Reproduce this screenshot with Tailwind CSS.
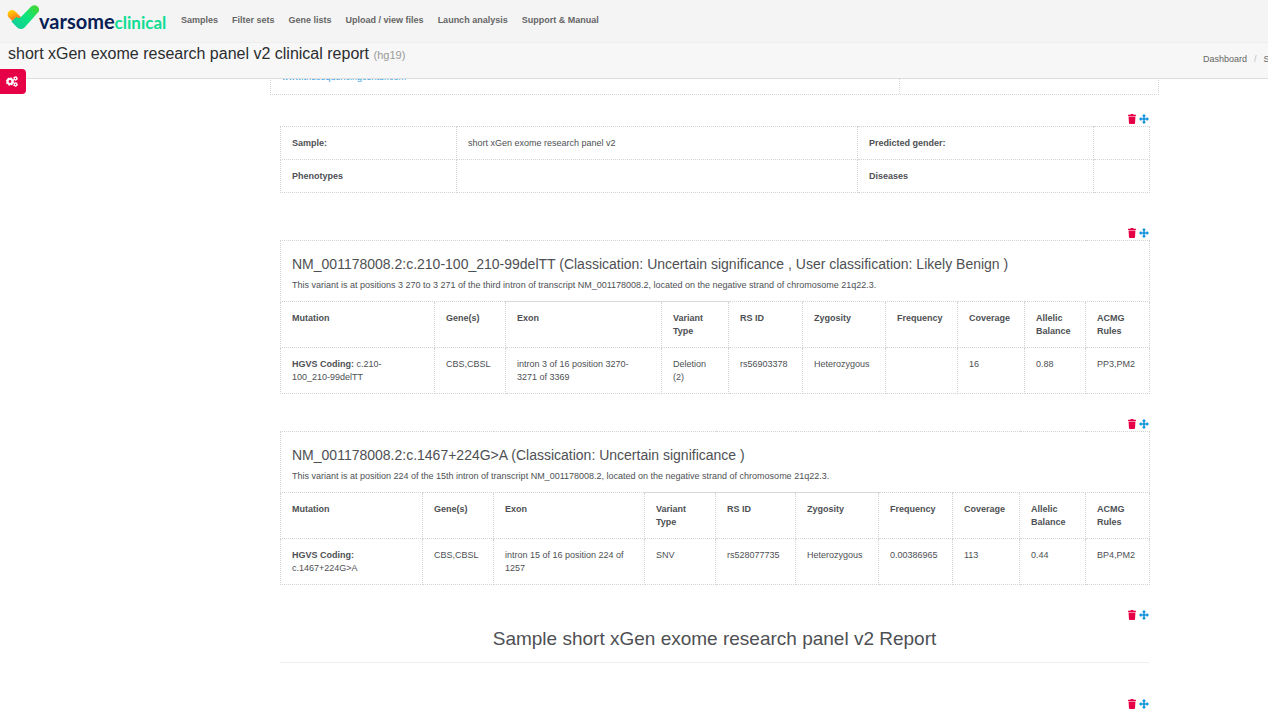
<!DOCTYPE html>
<html lang="en">
<head>
<meta charset="utf-8">
<title>short xGen exome research panel v2 clinical report</title>
<script src="https://cdn.jsdelivr.net/npm/@tailwindcss/browser@4"></script>
</head>
<body class="h-screen overflow-hidden bg-white font-['Liberation_Sans',Arial,sans-serif] text-[9px] leading-[13px] text-[#4e5054]">
<svg class="hidden" aria-hidden="true">
  <symbol id="trash" viewBox="0 0 448 512" preserveAspectRatio="none"><path d="M432 32H312l-9-19a24 24 0 0 0-22-13H167a24 24 0 0 0-22 13l-9 19H16A16 16 0 0 0 0 48v32a16 16 0 0 0 16 16h416a16 16 0 0 0 16-16V48a16 16 0 0 0-16-16zM32 128l21 339a48 48 0 0 0 48 45h246a48 48 0 0 0 48-45l21-339z"/></symbol>
  <symbol id="move" viewBox="0 0 512 512"><path d="M256 0l110 120h-70v96h96v-70l120 110-120 110v-70h-96v96h70L256 512 146 392h70v-96h-96v70L0 256l120-110v70h96v-96h-70z"/></symbol>
</svg>

<header class="relative z-10 bg-[#f4f4f4]">
  <div class="flex h-[42px] items-center pl-[7px]">
    <a href="#" class="flex h-[42px] w-[159px] shrink-0" aria-label="VarSome Clinical">
      <svg class="mt-[5px] h-[25px] w-[32px] shrink-0" viewBox="7 5 32 25">
        <defs>
          <linearGradient id="og" gradientUnits="userSpaceOnUse" x1="12" y1="10" x2="16" y2="22"><stop offset="0" stop-color="#ffd400"/><stop offset=".45" stop-color="#ffa010"/><stop offset="1" stop-color="#f4602c"/></linearGradient>
          <linearGradient id="gg" gradientUnits="userSpaceOnUse" x1="16" y1="27" x2="36" y2="8"><stop offset="0" stop-color="#12cf9a"/><stop offset=".55" stop-color="#0be57c"/><stop offset="1" stop-color="#3fd83c"/></linearGradient>
        </defs>
        <path d="M12 14.400l7 7" stroke="url(#og)" stroke-width="8.800" stroke-linecap="round"/>
        <path d="M11.400 21.400L16.400 17q2.600 2.400 5-.4L31.200 6.600Q34 4 37 6t1.800 5.400L24.800 27.200Q21 30.900 17.200 27.400z" fill="url(#gg)"/>
      </svg>
      <span class="mt-[9px] font-['Lato',sans-serif] text-[20px] leading-[24px] font-bold whitespace-nowrap text-[#0a1f56]">varsome<span class="text-[17px] text-[#0fdc93]">clinical</span></span>
    </a>
    <nav class="flex gap-[14px] pb-px pl-[15px] font-bold whitespace-nowrap text-[#666]">
      <a href="#">Samples</a><a href="#">Filter sets</a><a href="#">Gene lists</a><a href="#">Upload / view files</a><a href="#">Launch analysis</a><a href="#">Support &amp; Manual</a>
    </nav>
  </div>
  <div class="flex h-[37px] items-start border-t border-b border-t-[#eee] border-b-[#ddd] bg-[#f7f7f7] pl-[8px]">
    <h1 class="text-[16px] leading-[21px] text-[#2b2d2f]">short xGen exome research panel v2 clinical report <small class="text-[11px] text-[#999]">(hg19)</small></h1>
    <nav class="mt-[10px] ml-auto flex w-[65px] overflow-hidden whitespace-nowrap text-[#666]" aria-label="Breadcrumb">
      <a href="#">Dashboard</a><span class="px-[7px] text-[#bbb]">/</span><a href="#">Samples</a>
    </nav>
  </div>
  <button class="absolute top-[69px] left-0 flex h-[25px] w-[26px] items-center rounded-r-[4px] bg-[#e60046] pl-[6px]" aria-label="Report settings">
    <svg class="mb-px h-[11px] w-[12px]" viewBox="0 0 24 22" fill="none" stroke="#fff">
      <circle cx="8" cy="11" r="4.800" stroke-width="4"/><circle cx="8" cy="11" r="7" stroke-width="2.800" stroke-dasharray="3.100 2.400"/>
      <circle cx="19" cy="5" r="2.600" stroke-width="2.400"/><circle cx="19" cy="5" r="4.200" stroke-width="1.600" stroke-dasharray="2.300 2.090"/>
      <circle cx="19" cy="17" r="2.600" stroke-width="2.400"/><circle cx="19" cy="17" r="4.200" stroke-width="1.600" stroke-dasharray="2.300 2.090"/>
    </svg>
  </button>
</header>

<main class="mr-[109px] ml-[270px]">
  <div class="-mt-[21px] flex h-[37px] border border-dotted border-[#d6d6d6]">
    <div class="flex-1 border-r border-dotted border-[#d6d6d6] pt-[12px] pl-[11px]"><a href="#" class="text-[#2f9fe8]">www.thesequencingcenter.com</a></div>
    <div class="w-[258px]"></div>
  </div>

  <div class="px-[10px]">
    <section class="mt-[19px]">
      <div class="flex h-[12px] items-start justify-end gap-[3px]">
        <button class="text-[#e60046]" aria-label="Delete"><svg class="h-[10px] w-[8px]" fill="currentColor"><use href="#trash"/></svg></button>
        <button class="text-[#0d8fdc]" aria-label="Move"><svg class="h-[10px] w-[10px]" fill="currentColor"><use href="#move"/></svg></button>
      </div>
      <table class="w-full table-fixed border-collapse text-left [&_td]:border [&_td]:border-dotted [&_td]:border-[#d4d4d4] [&_td]:px-[11px] [&_td]:pt-[10px] [&_td]:pb-[9px] [&_th]:border [&_th]:border-dotted [&_th]:border-[#d4d4d4] [&_th]:px-[11px] [&_th]:pt-[10px] [&_th]:pb-[9px]">
        <colgroup><col class="w-[176px]"><col class="w-[401px]"><col class="w-[236px]"><col class="w-[56px]"></colgroup>
        <tbody>
          <tr><th>Sample:</th><td>short xGen exome research panel v2</td><th>Predicted gender:</th><td></td></tr>
          <tr><th>Phenotypes</th><td></td><th>Diseases</th><td></td></tr>
        </tbody>
      </table>
    </section>

    <section class="mt-[35px]">
      <div class="flex h-[12px] items-start justify-end gap-[3px]">
        <button class="text-[#e60046]" aria-label="Delete"><svg class="h-[10px] w-[8px]" fill="currentColor"><use href="#trash"/></svg></button>
        <button class="text-[#0d8fdc]" aria-label="Move"><svg class="h-[10px] w-[10px]" fill="currentColor"><use href="#move"/></svg></button>
      </div>
      <table class="w-full table-fixed border-collapse text-left [&_td]:border [&_td]:border-dotted [&_td]:border-[#d4d4d4] [&_td]:px-[11px] [&_td]:pt-[10px] [&_td]:pb-[9px] [&_td]:align-top [&_th]:border [&_th]:border-dotted [&_th]:border-[#d4d4d4] [&_th]:px-[11px] [&_th]:pt-[10px] [&_th]:pb-[9px] [&_th]:align-top">
        <colgroup><col class="w-[154px]"><col class="w-[71px]"><col class="w-[156px]"><col class="w-[67px]"><col class="w-[74px]"><col class="w-[83px]"><col class="w-[72px]"><col class="w-[67px]"><col class="w-[61px]"><col class="w-[64px]"></colgroup>
        <tbody>
          <tr><td colspan="10"><h2 class="mt-[3px] mb-[5px] text-[14px] leading-[20px]">NM_001178008.2:c.210-100_210-99delTT (Classication: Uncertain significance , User classification: Likely Benign )</h2><p>This variant is at positions 3 270 to 3 271 of the third intron of transcript NM_001178008.2, located on the negative strand of chromosome 21q22.3.</p></td></tr>
          <tr><th>Mutation</th><th>Gene(s)</th><th class="border-t-[#d8d8d8]! [border-top-style:solid]!">Exon</th><th class="border-t-[#d8d8d8]! [border-top-style:solid]!">Variant<br>Type</th><th>RS ID</th><th>Zygosity</th><th>Frequency</th><th>Coverage</th><th>Allelic<br>Balance</th><th>ACMG<br>Rules</th></tr>
          <tr><td><b>HGVS Coding:</b> c.210-<br>100_210-99delTT</td><td>CBS,CBSL</td><td>intron 3 of 16 position 3270-<br>3271 of 3369</td><td>Deletion<br>(2)</td><td>rs56903378</td><td>Heterozygous</td><td></td><td>16</td><td>0.88</td><td>PP3,PM2</td></tr>
        </tbody>
      </table>
    </section>

    <section class="mt-[25px]">
      <div class="flex h-[12px] items-start justify-end gap-[3px]">
        <button class="text-[#e60046]" aria-label="Delete"><svg class="h-[10px] w-[8px]" fill="currentColor"><use href="#trash"/></svg></button>
        <button class="text-[#0d8fdc]" aria-label="Move"><svg class="h-[10px] w-[10px]" fill="currentColor"><use href="#move"/></svg></button>
      </div>
      <table class="w-full table-fixed border-collapse text-left [&_td]:border [&_td]:border-dotted [&_td]:border-[#d4d4d4] [&_td]:px-[11px] [&_td]:pt-[10px] [&_td]:pb-[9px] [&_td]:align-top [&_th]:border [&_th]:border-dotted [&_th]:border-[#d4d4d4] [&_th]:px-[11px] [&_th]:pt-[10px] [&_th]:pb-[9px] [&_th]:align-top">
        <colgroup><col class="w-[142px]"><col class="w-[71px]"><col class="w-[151px]"><col class="w-[71px]"><col class="w-[80px]"><col class="w-[83px]"><col class="w-[74px]"><col class="w-[67px]"><col class="w-[66px]"><col class="w-[64px]"></colgroup>
        <tbody>
          <tr><td colspan="10"><h2 class="mt-[3px] mb-[5px] text-[14px] leading-[20px]">NM_001178008.2:c.1467+224G&gt;A (Classication: Uncertain significance )</h2><p>This variant is at position 224 of the 15th intron of transcript NM_001178008.2, located on the negative strand of chromosome 21q22.3.</p></td></tr>
          <tr><th>Mutation</th><th>Gene(s)</th><th>Exon</th><th class="border-t-[#d8d8d8]! [border-top-style:solid]!">Variant<br>Type</th><th class="border-t-[#d8d8d8]! [border-top-style:solid]!">RS ID</th><th class="border-t-[#d8d8d8]! [border-top-style:solid]!">Zygosity</th><th>Frequency</th><th>Coverage</th><th>Allelic<br>Balance</th><th>ACMG<br>Rules</th></tr>
          <tr><td><b>HGVS Coding:</b><br>c.1467+224G&gt;A</td><td>CBS,CBSL</td><td>intron 15 of 16 position 224 of<br>1257</td><td>SNV</td><td>rs528077735</td><td>Heterozygous</td><td>0.00386965</td><td>113</td><td>0.44</td><td>BP4,PM2</td></tr>
        </tbody>
      </table>
    </section>

    <section class="mt-[25px] border-b border-[#eee] pb-[11px]">
      <div class="flex h-[12px] items-start justify-end gap-[3px]">
        <button class="text-[#e60046]" aria-label="Delete"><svg class="h-[10px] w-[8px]" fill="currentColor"><use href="#trash"/></svg></button>
        <button class="text-[#0d8fdc]" aria-label="Move"><svg class="h-[10px] w-[10px]" fill="currentColor"><use href="#move"/></svg></button>
      </div>
      <h2 class="mt-[5px] text-center text-[19px] leading-[24px]">Sample short xGen exome research panel v2 Report</h2>
    </section>

    <section class="mt-[36px]">
      <div class="flex h-[12px] items-start justify-end gap-[3px]">
        <button class="text-[#e60046]" aria-label="Delete"><svg class="h-[10px] w-[8px]" fill="currentColor"><use href="#trash"/></svg></button>
        <button class="text-[#0d8fdc]" aria-label="Move"><svg class="h-[10px] w-[10px]" fill="currentColor"><use href="#move"/></svg></button>
      </div>
    </section>
  </div>
</main>
</body>
</html>
